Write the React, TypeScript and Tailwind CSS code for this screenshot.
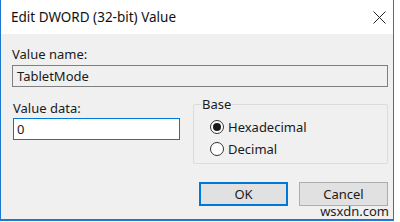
import { useState } from 'react';

function Radio({ checked, label, onClick }: { checked: boolean; label: string; onClick: () => void }) {
  return (
    <button type="button" onClick={onClick} className="flex items-center h-[22px] text-left">
      <span className="w-[14px] h-[14px] rounded-full border border-[#333333] bg-white flex items-center justify-center">
        {checked && <span className="w-[8px] h-[8px] rounded-full bg-[#1a1a1a]" />}
      </span>
      <span className="ml-[4px]">{label}</span>
    </button>
  );
}

export default function App() {
  const [base, setBase] = useState<'hex' | 'dec'>('hex');
  const [value, setValue] = useState('0');

  return (
    <div
      className="w-[400px] h-[222px] bg-white text-[13px] leading-[16px] text-[#1a1a1a]"
      style={{ fontFamily: '"Noto Sans", "Open Sans", sans-serif' }}
    >
      <div className="w-[394px] h-[221px] border-x border-b-2 border-[#1e78cf] flex flex-col">
        {/* title bar */}
        <div className="h-[34px] bg-white flex items-center justify-between pl-[10px] pr-[7px]">
          <span className="text-[13.5px] text-[#111]">Edit DWORD (32-bit) Value</span>
          <svg width="13" height="13" viewBox="0 0 13 13">
            <path d="M0.5 0.5 L12.5 12.5 M12.5 0.5 L0.5 12.5" stroke="#222" strokeWidth="1" />
          </svg>
        </div>

        {/* body */}
        <div className="flex-1 bg-[#f0f0f0] relative pl-[11px] pr-[5px] pt-[12px]">
          <div>Value name:</div>
          <div className="mt-[3px] h-[22px] w-[376px] border border-[#7f7f7f] bg-[#f0f0f0] flex items-center px-[4px]">
            TabletMode
          </div>

          <div className="flex mt-[13px]">
            <div className="w-[168px] shrink-0 pl-[1px]">
              <div>Value data:</div>
              <input
                value={value}
                onChange={e => setValue(e.target.value)}
                className="mt-[2px] h-[22px] w-[167px] border border-[#0078d7] bg-white px-[3px] outline-none"
              />
            </div>
            <fieldset className="ml-[13px] mt-[-4px] w-[195px] shrink-0 h-[68px] border border-[#dcdcdc] rounded-[2px] pl-[16px] pt-[4px]">
              <legend className="ml-[-9px] px-[1px]">Base</legend>
              <Radio checked={base === 'hex'} label="Hexadecimal" onClick={() => setBase('hex')} />
              <Radio checked={base === 'dec'} label="Decimal" onClick={() => setBase('dec')} />
            </fieldset>
          </div>

          <div className="flex justify-end gap-[11px] mt-[18px]">
            <button className="w-[89px] h-[24px] border-2 border-[#0078d7] bg-[#e1e1e1]">OK</button>
            <button className="w-[89px] h-[24px] border border-[#adadad] bg-[#e1e1e1]">Cancel</button>
          </div>

          <span className="absolute right-[4px] bottom-[1px] text-[13px] leading-[14px] text-[#222]">wsxdn.com</span>
        </div>
      </div>
    </div>
  );
}
